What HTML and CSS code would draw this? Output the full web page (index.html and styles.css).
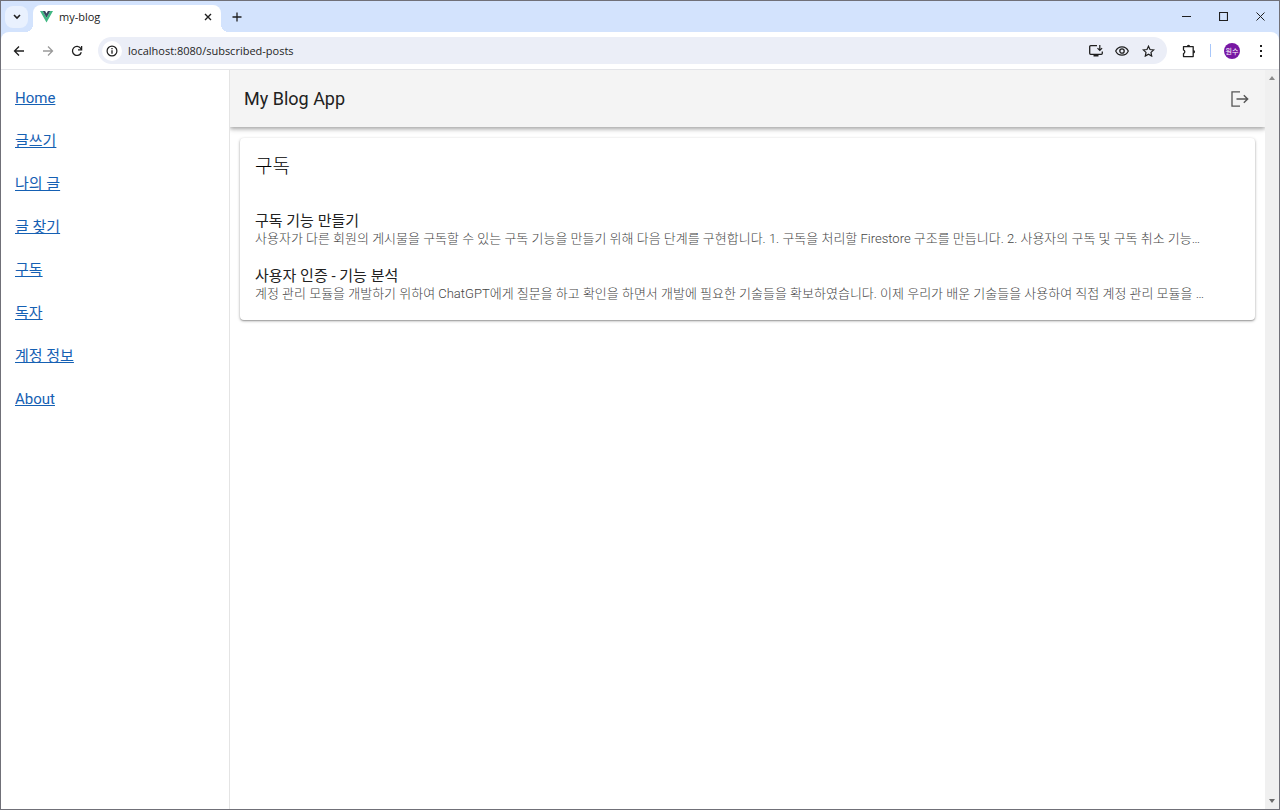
FILE: index.html
```html
<!DOCTYPE html>
<html lang="ko">
<head>
<meta charset="utf-8">
<meta name="viewport" content="width=device-width, initial-scale=1">
<title>my-blog</title>
<link rel="stylesheet" href="styles.css">
</head>
<body>
<div class="window">
  <div class="tabstrip">
    <button class="tab-search" aria-label="Search tabs"><svg width="8" height="6" viewBox="0 0 8 6"><path d="M1 1l3 3 3-3" fill="none" stroke="currentColor" stroke-width="1.6"/></svg></button>
    <div class="tab">
      <svg width="13" height="12" viewBox="0 0 13 12"><path d="M0 0h2.7l3.8 6.8L10.300 0H13L6.500 11.500z" fill="#41b883"/><path d="M2.700 0h2.400l1.400 2.500L7.900 0h2.400L6.500 6.800z" fill="#35495e"/></svg>
      <span class="tab-title">my-blog</span>
      <button class="tab-close" aria-label="Close tab"><svg width="8" height="8" viewBox="0 0 8 8"><path d="M1 1l6 6M7 1L1 7" stroke="currentColor" stroke-width="1.400"/></svg></button>
    </div>
    <button class="new-tab" aria-label="New tab"><svg width="10" height="10" viewBox="0 0 10 10"><path d="M5 .5v9M.5 5h9" stroke="currentColor" stroke-width="1.300"/></svg></button>
    <div class="window-controls">
      <button aria-label="Minimize"><svg width="9" height="9" viewBox="0 0 9 9"><path d="M0 4.500h9" stroke="currentColor"/></svg></button>
      <button aria-label="Maximize"><svg width="9" height="9" viewBox="0 0 9 9"><path d="M.5.5h8v8h-8z" fill="none" stroke="currentColor" stroke-width="1.200"/></svg></button>
      <button aria-label="Close"><svg width="9" height="9" viewBox="0 0 9 9"><path d="M.5.5l8 8M8.500.5l-8 8" stroke="currentColor"/></svg></button>
    </div>
  </div>
  <div class="toolbar">
    <button class="nav" aria-label="Back"><svg width="12" height="12" viewBox="0 0 12 12"><path d="M11 6H2M6 1.500L1.500 6 6 10.500" fill="none" stroke="currentColor" stroke-width="1.300"/></svg></button>
    <button class="nav nav-off" aria-label="Forward" disabled><svg width="12" height="12" viewBox="0 0 12 12"><path d="M1 6h9M6 1.500L10.500 6 6 10.500" fill="none" stroke="currentColor" stroke-width="1.300"/></svg></button>
    <button class="nav" aria-label="Reload"><svg width="12" height="12" viewBox="0 0 12 12"><path d="M10.300 7.200A4.500 4.500 0 1 1 9.700 3.400L10.500 4.500" fill="none" stroke="currentColor" stroke-width="1.300"/><path d="M10.600 1v3.800H7" fill="none" stroke="currentColor" stroke-width="1.300"/></svg></button>
    <div class="omnibox">
      <button class="site-info" aria-label="Site information"><svg width="12" height="12" viewBox="0 0 12 12"><circle cx="6" cy="6" r="4.900" fill="none" stroke="currentColor" stroke-width="1.200"/><path d="M6 5.200v3.500M6 3v1.300" stroke="currentColor" stroke-width="1.300"/></svg></button>
      <input class="url" type="text" aria-label="Address" value="localhost:8080/subscribed-posts">
      <button class="action" aria-label="Install app"><svg width="14" height="12" viewBox="0 0 14 12"><path d="M8 .7H1.700a1 1 0 0 0-1 1v6.600a1 1 0 0 0 1 1h10.600a1 1 0 0 0 1-1V6.500" fill="none" stroke="currentColor" stroke-width="1.300"/><path d="M4.500 9h5v2.500h-5z" fill="currentColor"/><path d="M10.800 0v5.200M8.500 3.200l2.300 2.300 2.300-2.300" fill="none" stroke="currentColor" stroke-width="1.200"/></svg></button>
      <button class="action" aria-label="View options"><svg width="14" height="10" viewBox="0 0 14 10"><path d="M.7 5C3.200-.6 10.800-.6 13.300 5 10.800 10.600 3.200 10.600.7 5z" fill="none" stroke="currentColor" stroke-width="1.200"/><circle cx="7" cy="5" r="2.200" fill="none" stroke="currentColor" stroke-width="1.300"/></svg></button>
      <button class="action" aria-label="Bookmark"><svg width="13" height="12" viewBox="0 0 13 12"><path d="M6.500 1.200L8 4.500l3.700.4L9 7.400l.7 3.700-3.200-1.900-3.200 1.900L4 7.400 1.300 4.900 5 4.500z" fill="none" stroke="currentColor" stroke-width="1.200"/></svg></button>
    </div>
    <button class="extensions" aria-label="Extensions"><svg width="14" height="14" viewBox="0 0 14 14"><path d="M1.500 2.700H11.200V12.600H1.500V9.500a1.900 1.900 0 0 0 0-3.600z" fill="none" stroke="currentColor" stroke-width="1.300" stroke-linejoin="round"/><path d="M4.800 2.700a1.700 1.900 0 0 1 3.400 0zM11.200 6a1.900 1.700 0 0 1 0 3.400z" fill="currentColor"/></svg></button>
    <span class="divider"></span>
    <button class="avatar" aria-label="Profile">원수</button>
    <button class="more" aria-label="Menu"><svg width="4" height="14" viewBox="0 0 4 14"><path d="M1 1h2v2H1zM1 6h2v2H1zM1 11h2v2H1z" fill="currentColor"/></svg></button>
  </div>
  <div class="page">
    <nav class="sidebar">
      <a href="#">Home</a>
      <a href="#">글쓰기</a>
      <a href="#">나의 글</a>
      <a href="#">글 찾기</a>
      <a href="#">구독</a>
      <a href="#">독자</a>
      <a href="#">계정 정보</a>
      <a href="#">About</a>
    </nav>
    <main class="main">
      <header class="app-bar">
        <h1>My Blog App</h1>
        <button class="logout" aria-label="Logout"><svg width="18" height="16" viewBox="0 0 18 16"><path d="M9 .8H1v14.400h8" fill="none" stroke="currentColor" stroke-width="1.300"/><path d="M5.500 8h11M12.800 4.200L16.700 8l-3.900 3.800" fill="none" stroke="currentColor" stroke-width="1.400"/></svg></button>
      </header>
      <section class="card">
        <h2>구독</h2>
        <article class="post">
          <h3>구독 기능 만들기</h3>
          <p>사용자가 다른 회원의 게시물을 구독할 수 있는 구독 기능을 만들기 위해 다음 단계를 구현합니다. 1. 구독을 처리할 Firestore 구조를 만듭니다. 2. 사용자의 구독 및 구독 취소 기능…</p>
        </article>
        <article class="post">
          <h3>사용자 인증 - 기능 분석</h3>
          <p>계정 관리 모듈을 개발하기 위하여 ChatGPT에게 질문을 하고 확인을 하면서 개발에 필요한 기술들을 확보하였습니다. 이제 우리가 배운 기술들을 사용하여 직접 계정 관리 모듈을 …</p>
        </article>
      </section>
    </main>
    <div class="scrollbar" aria-hidden="true">
      <svg width="6" height="4" viewBox="0 0 6 4"><path d="M0 4l3-4 3 4z" fill="#8b8b8b"/></svg>
      <svg width="6" height="4" viewBox="0 0 6 4"><path d="M0 0l3 4 3-4z" fill="#6b6b6b"/></svg>
    </div>
  </div>
</div>
</body>
</html>
```
FILE: styles.css
```css
* { box-sizing: border-box; }

body {
  margin: 0;
  font-family: Roboto, "Noto Sans CJK KR", sans-serif;
  color: #212121;
}

button {
  display: flex;
  align-items: center;
  justify-content: center;
  flex: none;
  padding: 0;
  border: 0;
  background: none;
  color: #1f1f1f;
}

svg { display: block; flex: none; }

.window {
  display: flex;
  flex-direction: column;
  min-height: 100vh;
  border: 1px solid #707078;
  background: #d3e3fd;
}

/* Browser chrome */
.tabstrip {
  display: flex;
  align-items: center;
  height: 31px;
  padding-left: 4px;
}

.tab-search {
  width: 23px;
  height: 22px;
  border-radius: 8px;
  background: #e9f1fe;
}

.tab {
  position: relative;
  display: flex;
  align-items: center;
  align-self: flex-end;
  width: 188px;
  height: 27px;
  margin-left: 5px;
  padding: 0 7px 4px;
  gap: 6px;
  border-radius: 8px 8px 0 0;
  background: #fff;
}

.tab::before,
.tab::after {
  content: "";
  position: absolute;
  bottom: 0;
  width: 8px;
  height: 8px;
}

.tab::before {
  right: 100%;
  background: radial-gradient(circle at 0 0, transparent 8px, #fff 8px);
}

.tab::after {
  left: 100%;
  background: radial-gradient(circle at 100% 0, transparent 8px, #fff 8px);
}

.tab-title {
  flex: 1;
  font: 11px/14px "Open Sans", sans-serif;
}

.tab-close { width: 12px; height: 12px; }

.new-tab { width: 24px; height: 24px; margin-left: 4px; }

.window-controls { display: flex; margin-left: auto; }

.window-controls button { width: 37px; height: 30px; }

.toolbar {
  display: flex;
  align-items: center;
  height: 38px;
  padding: 0 9px 0 3px;
  position: relative;
  z-index: 1;
  border-bottom: 1px solid #e3e4e8;
  border-radius: 8px 8px 0 0;
  background: #fff;
}

.nav { width: 29px; height: 28px; }

.nav-off { color: #9a9a9a; }

.omnibox {
  display: flex;
  flex: 1;
  align-items: center;
  height: 27px;
  margin-left: 7px;
  padding: 0 6px 0 4px;
  border-radius: 14px;
  background: #ebeef7;
}

.site-info {
  width: 20px;
  height: 20px;
  border-radius: 50%;
  background: #fff;
}

.url {
  flex: 1;
  min-width: 0;
  padding: 0 0 0 6px;
  border: 0;
  outline: 0;
  background: none;
  color: #1f1f1f;
  font: 11px/20px "Open Sans", sans-serif;
}

.action { width: 26px; height: 24px; }

.extensions { width: 28px; height: 24px; margin-left: 8px; }

.divider { width: 1px; height: 13px; margin: 0 13px 0 7px; background: #a8c7fa; }

.avatar {
  width: 16px;
  height: 16px;
  border-radius: 50%;
  background: #7717a3;
  color: #fff;
  font: 7px/16px "Noto Sans CJK KR", sans-serif;
}

.more { width: 18px; height: 24px; margin-left: 12px; }

/* Blog application */
.page {
  display: flex;
  flex: 1;
  background: #fff;
}

.sidebar {
  position: relative;
  z-index: 1;
  display: flex;
  flex: none;
  flex-direction: column;
  align-items: flex-start;
  gap: 23px;
  width: 229px;
  padding: 18px 14px;
  border-right: 1px solid #e4e4e4;
  background: #fff;
}

.sidebar a {
  color: #1560b3;
  font-size: 15px;
  line-height: 20px;
}

.main { flex: 1; min-width: 0; }

.app-bar {
  display: flex;
  align-items: center;
  justify-content: space-between;
  height: 57px;
  padding: 0 16px 0 14px;
  background: #f4f4f4;
  box-shadow: 0 2px 4px rgba(0, 0, 0, .3), 0 1px 8px rgba(0, 0, 0, .1);
}

h1, h2, h3, p { margin: 0; font-weight: 400; }

h1 { font-size: 18px; line-height: 28px; }

.logout { color: #555; }

.card {
  margin: 11px 10px;
  padding: 14px 15px 18px;
  border-radius: 4px;
  background: #fff;
  box-shadow: 0 1px 3px rgba(0, 0, 0, .35), 0 1px 1px rgba(0, 0, 0, .15);
}

h2 { margin-bottom: 29px; color: #000; font-size: 19px; font-weight: 300; line-height: 30px; }

.post + .post { margin-top: 19px; }

h3 { font-size: 15px; line-height: 20px; }

.post p {
  overflow: hidden;
  color: #444;
  font-size: 13px;
  font-weight: 300;
  line-height: 16px;
  text-overflow: ellipsis;
  white-space: nowrap;
}

.scrollbar {
  position: relative;
  z-index: 1;
  display: flex;
  flex: none;
  flex-direction: column;
  align-items: center;
  justify-content: space-between;
  width: 14px;
  padding: 6px 0;
  background: #f0f0f0;
}
```
